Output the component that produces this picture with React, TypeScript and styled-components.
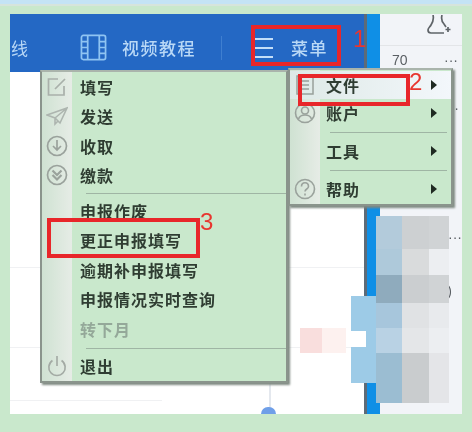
import styled, { createGlobalStyle } from "styled-components";

const MENU_FONT = `"Noto Sans CJK SC", "Noto Sans", sans-serif`;

const LEFT_TOP = [
  { label: "填写", icon: <EditIcon /> },
  { label: "发送", icon: <SendIcon /> },
  { label: "收取", icon: <DownCircleIcon /> },
  { label: "缴款", icon: <YenCircleIcon /> },
];

const LEFT_MID = [
  { label: "申报作废" },
  { label: "更正申报填写" },
  { label: "逾期补申报填写" },
  { label: "申报情况实时查询" },
  { label: "转下月", disabled: true },
];

const MOSAIC = [
  ["transparent", "#b3cbdb", "#cdd0d2", "#d0d3d5"],
  ["transparent", "#aec9da", "#d9dbdc", "#eceef1"],
  ["transparent", "#8fabbd", "#cbced0", "#d0d3d5"],
  ["#9dcbe7", "#8fabbd", "#cbced0", "#d0d3d5"],
  ["#9dcbe7", "#a7c6dc", "#e0e2e4", "#e8eaed"],
  ["#9dcbe7", "#b9d2e4", "#e4e6e8", "#eceef1"],
  ["#9dcbe7", "#9bbdd2", "#c9ccce", "#e4e5e8"],
  ["transparent", "#9bbdd2", "#c9ccce", "#e4e5e8"],
];

export default function App() {
  return (
    <>
      <GlobalStyle />
      <Page>
        <TopStrip />
        <Window>
          <Main>
            <Header>
              <Partial>线</Partial>
              <HeaderItem>
                <FilmIcon />
                <HeaderLabel>视频教程</HeaderLabel>
              </HeaderItem>
              <HeaderDivider />
              <MenuButton>
                <BurgerIcon />
                <HeaderLabel>菜单</HeaderLabel>
              </MenuButton>
            </Header>
            <Content>
              <Rule $width={354} $top={195} />
              <Rule $width={354} $top={79} />
              <Rule $width={152} $top={52} />
            </Content>
          </Main>
          <Rail />
          <Side>
            <SideTop>
              <UserPlusIcon />
            </SideTop>
            <SideRow>
              <span>70</span>
              <span>···</span>
            </SideRow>
            <SideMark $top={32} $right={3}>··</SideMark>
            <SideMark $top={113} $right={0}>···</SideMark>
            <SideMark $top={38} $right={10}>)</SideMark>
          </Side>

          <Stem />
          <Dot />
          <Smudge />
          <Mosaic>
            {MOSAIC.flatMap((row, r) =>
              row.map((color, c) => <Cell key={`${r}-${c}`} $color={color} />)
            )}
            <Notch />
          </Mosaic>

          <LeftMenu>
            {LEFT_TOP.map((item) => (
              <Item key={item.label}>
                <Slot>{item.icon}</Slot>
                <Label>{item.label}</Label>
              </Item>
            ))}
            <Separator />
            {LEFT_MID.map((item) => (
              <Item key={item.label}>
                <Slot />
                <Label $disabled={item.disabled}>{item.label}</Label>
              </Item>
            ))}
            <LastSeparator />
            <Item>
              <Slot>
                <PowerIcon />
              </Slot>
              <Label>退出</Label>
            </Item>
          </LeftMenu>

          <RightMenu>
            <SubItem $active>
              <SubSlot>
                <FileIcon />
              </SubSlot>
              <Label>文件</Label>
              <Arrow />
            </SubItem>
            <SubItem>
              <SubSlot>
                <UserCircleIcon />
              </SubSlot>
              <Label>账户</Label>
              <Arrow />
            </SubItem>
            <SubSeparator />
            <SubItem>
              <SubSlot />
              <Label>工具</Label>
              <Arrow />
            </SubItem>
            <SubSeparator />
            <SubItem>
              <SubSlot>
                <HelpIcon />
              </SubSlot>
              <Label>帮助</Label>
              <Arrow />
            </SubItem>
          </RightMenu>

          <Callout $left={241} $top={11} $width={90} $height={41} />
          <Step $left={343} $top={10}>1</Step>
          <Callout $left={288} $top={60} $width={112} $height={32} />
          <Step $left={399} $top={53}>2</Step>
          <Callout $left={37} $top={204} $width={153} $height={40} />
          <Step $left={190} $top={193}>3</Step>
        </Window>
      </Page>
    </>
  );
}

function FilmIcon() {
  return (
    <svg width="27" height="27" viewBox="0 0 28 28" fill="none" stroke="#8fc4f2" strokeWidth="1.8">
      <rect x="1.5" y="1.5" width="25" height="25" rx="2" />
      <path d="M8 1.5v25M20 1.5v25M1.5 8H8M1.5 14H8M1.5 20H8M20 8h6.5M20 14h6.5M20 20h6.5" />
    </svg>
  );
}

function BurgerIcon() {
  return (
    <svg width="18" height="24" viewBox="0 0 18 24" fill="none" stroke="#c4def8" strokeWidth="1.8">
      <path d="M0 3h18M0 12h18M0 21h18" />
    </svg>
  );
}

function UserPlusIcon() {
  return (
    <svg width="26" height="20" viewBox="0 0 26 20" fill="none" stroke="#5f6468" strokeWidth="1.7">
      <path d="M6 0c1 4 0 7-2 10-1 2-3 3-3 5 0 2 1 3 3 3h13M15 0c-1 4 0 7 2 9l2 3M21 12v5M18.5 14.5h5" />
    </svg>
  );
}

function EditIcon() {
  return (
    <svg width="20" height="20" viewBox="0 0 20 20" fill="none" stroke="#a9b0aa" strokeWidth="1.7">
      <path d="M11 2H1.5v16h15.5V9" />
      <path d="M8 12 18 2" />
    </svg>
  );
}

function SendIcon() {
  return (
    <svg width="22" height="20" viewBox="0 0 22 20" fill="none" stroke="#adb5af" strokeWidth="1.6">
      <path d="M1 9 21 2 14 17 9 12 1 9ZM21 2 9 12v6l3-3" />
    </svg>
  );
}

function DownCircleIcon() {
  return (
    <svg width="22" height="22" viewBox="0 0 22 22" fill="none" stroke="#9aa29c" strokeWidth="1.7">
      <circle cx="11" cy="11" r="9.5" />
      <path d="M11 5v10M7 11l4 4 4-4" />
    </svg>
  );
}

function YenCircleIcon() {
  return (
    <svg width="22" height="22" viewBox="0 0 22 22" fill="none" stroke="#9aa29c" strokeWidth="1.7">
      <circle cx="11" cy="11" r="9.5" />
      <path d="M6.5 6.5 11 11l4.5-4.5M6.5 11 11 15.5l4.5-4.5" strokeWidth="2.2" />
    </svg>
  );
}

function PowerIcon() {
  return (
    <svg width="20" height="22" viewBox="0 0 22 24" fill="none" stroke="#a3aaa4" strokeWidth="1.8">
      <path d="M11 1v11M6 6a9 9 0 1 0 10 0" />
    </svg>
  );
}

function FileIcon() {
  return (
    <svg width="18" height="20" viewBox="0 0 18 20" fill="none" stroke="#98a09a" strokeWidth="1.5">
      <rect x="1" y="1" width="16" height="18" />
      <path d="M5 6h8M5 10h8M5 14h8" />
    </svg>
  );
}

function UserCircleIcon() {
  return (
    <svg width="22" height="22" viewBox="0 0 22 22" fill="none" stroke="#9aa29c" strokeWidth="1.6">
      <circle cx="11" cy="11" r="9.5" />
      <circle cx="11" cy="8.5" r="3.5" />
      <path d="M4.5 17c1-3 3.5-4 6.5-4s5.5 1 6.5 4" />
    </svg>
  );
}

function HelpIcon() {
  return (
    <svg width="22" height="22" viewBox="0 0 22 22" fill="none" stroke="#9aa29c" strokeWidth="1.6">
      <circle cx="11" cy="11" r="9.5" />
      <path d="M7.5 8.5c0-5 7-5 7 0 0 2.5-3.5 2.5-3.5 5M11 15.5v2" />
    </svg>
  );
}

const GlobalStyle = createGlobalStyle`
  html, body {
    margin: 0;
    padding: 0;
    background: #c9e8cc;
  }
  #root {
    filter: blur(0.6px);
  }
`;

const Page = styled.div`
  width: 472px;
  height: 432px;
  overflow: hidden;
  background: #c9e8cc;
  font-family: ${MENU_FONT};
`;

const TopStrip = styled.div`
  height: 4px;
  margin-bottom: 10px;
  background: #c4e3f5;
  border-bottom: 2px solid #d6e4dc;
`;

const Window = styled.div`
  position: relative;
  display: flex;
  width: 452px;
  height: 400px;
  margin-left: 10px;
  margin-top: -2px;
`;

const Main = styled.div`
  display: flex;
  flex-direction: column;
  width: 354px;
  background: #fff;
`;

const Header = styled.div`
  display: flex;
  align-items: center;
  height: 58px;
  padding-top: 9px;
  box-sizing: border-box;
  background: #2468c4;
  color: #b9d8f6;
`;

const Partial = styled.div`
  width: 18px;
  margin-right: 52px;
  overflow: hidden;
  direction: rtl;
  font-size: 17px;
`;

const HeaderItem = styled.div`
  display: flex;
  align-items: center;
  gap: 15px;
`;

const HeaderLabel = styled.span`
  font-size: 17px;
  font-weight: 500;
  letter-spacing: 1.5px;
`;

const HeaderDivider = styled.div`
  width: 1px;
  height: 24px;
  margin-left: 25px;
  margin-right: 33px;
  background: #3f7fd0;
`;

const MenuButton = styled.div`
  display: flex;
  align-items: center;
  gap: 18px;
`;

const Content = styled.div`
  display: flex;
  flex-direction: column;
  flex: 1;
`;

const Rule = styled.div<{ $width: number; $top: number }>`
  width: ${(p) => p.$width}px;
  height: 1px;
  margin-top: ${(p) => p.$top}px;
  background: #f0f1f3;
`;

const Rail = styled.div`
  width: 13px;
  border-left: 3px solid #5d6b78;
  background: #0f8fe6;
`;

const Side = styled.div`
  flex: 1;
  background: #f2f4f8;
  color: #5a5f64;
`;

const SideTop = styled.div`
  display: flex;
  justify-content: flex-end;
  height: 32px;
  padding: 1px 9px 0 0;
  box-sizing: border-box;
  border-bottom: 1px solid #e3e5e8;
`;

const SideRow = styled.div`
  display: flex;
  justify-content: space-between;
  padding: 6px 4px 0 12px;
  font-family: "Liberation Sans", sans-serif;
  font-size: 14px;
`;

const SideMark = styled.div<{ $top: number; $right: number }>`
  margin-top: ${(p) => p.$top}px;
  padding-right: ${(p) => p.$right}px;
  text-align: right;
  font-family: "Liberation Sans", sans-serif;
  font-size: 14px;
  line-height: 16px;
`;

const Stem = styled.div`
  position: absolute;
  left: 259px;
  top: 368px;
  width: 2px;
  height: 26px;
  background: #e4e8ee;
`;

const Dot = styled.div`
  position: absolute;
  left: 251px;
  top: 393px;
  width: 15px;
  height: 7px;
  overflow: hidden;
  border-radius: 8px 8px 0 0;
  background: #6f9fe8;
`;

const Smudge = styled.div`
  position: absolute;
  left: 290px;
  top: 314px;
  width: 46px;
  height: 25px;
  background: linear-gradient(90deg, #f9dedd 0 48%, #fdf1ef 48% 100%);
`;

const Mosaic = styled.div`
  position: absolute;
  left: 341px;
  top: 202px;
  display: grid;
  grid-template-columns: 25px 26px 27px 20px;
  grid-template-rows: 33px 26px 21px 7px 25px 25px 30px 20px;
`;

const Cell = styled.div<{ $color: string }>`
  background: ${(p) => p.$color};
`;

const Notch = styled.div`
  position: absolute;
  left: 0;
  top: 115px;
  width: 15px;
  height: 16px;
  background: #fff;
`;

const MenuPanel = styled.div`
  position: absolute;
  box-sizing: border-box;
  border: 2px solid #8a948c;
  border-top-color: #aab4ac;
  background: linear-gradient(90deg, #cfe2d2 0, #e6ece6 30px, #c9e8cc 30px);
  box-shadow: 2px 2px 2px #7f8a82;
  color: #2f3d32;
  font-size: 16px;
  font-weight: 700;
`;

const LeftMenu = styled(MenuPanel)`
  left: 30px;
  top: 56px;
  width: 248px;
  height: 313px;
`;

const RightMenu = styled(MenuPanel)`
  left: 278px;
  top: 54px;
  width: 165px;
  height: 138px;
  padding-top: 1px;
`;

const Item = styled.div`
  display: flex;
  align-items: center;
  height: 29.5px;
`;

const SubItem = styled.div<{ $active?: boolean }>`
  display: flex;
  align-items: center;
  height: 28px;
  padding-right: 14px;
  background: ${(p) =>
    p.$active ? "linear-gradient(90deg, #dde9e6 0, #f3f7fb 100%)" : "transparent"};
`;

const Slot = styled.div`
  display: flex;
  flex: none;
  align-items: center;
  justify-content: center;
  width: 30px;
  height: 100%;
  margin-right: 8px;
`;

const SubSlot = styled(Slot)`
  margin-right: 6px;
`;

const Label = styled.span<{ $disabled?: boolean }>`
  flex: 1;
  letter-spacing: 1px;
  white-space: nowrap;
  color: ${(p) => (p.$disabled ? "#94a899" : "inherit")};
`;

const Arrow = styled.span`
  width: 0;
  height: 0;
  border-top: 5px solid transparent;
  border-bottom: 5px solid transparent;
  border-left: 6px solid #1f2a22;
`;

const Separator = styled.div`
  height: 1px;
  margin: 3px 0 2px 44px;
  background: #9fb5a4;
`;

const LastSeparator = styled(Separator)`
  margin: 4px 0 3px 44px;
`;

const SubSeparator = styled(Separator)`
  margin: 4.5px 4px 4.5px 40px;
`;

const Callout = styled.div<{ $left: number; $top: number; $width: number; $height: number }>`
  position: absolute;
  left: ${(p) => p.$left}px;
  top: ${(p) => p.$top}px;
  width: ${(p) => p.$width}px;
  height: ${(p) => p.$height}px;
  box-sizing: border-box;
  border: 4px solid #e8262a;
`;

const Step = styled.div<{ $left: number; $top: number }>`
  position: absolute;
  left: ${(p) => p.$left}px;
  top: ${(p) => p.$top}px;
  font-family: "Liberation Sans", sans-serif;
  font-size: 24px;
  line-height: 30px;
  color: #e8362f;
`;
